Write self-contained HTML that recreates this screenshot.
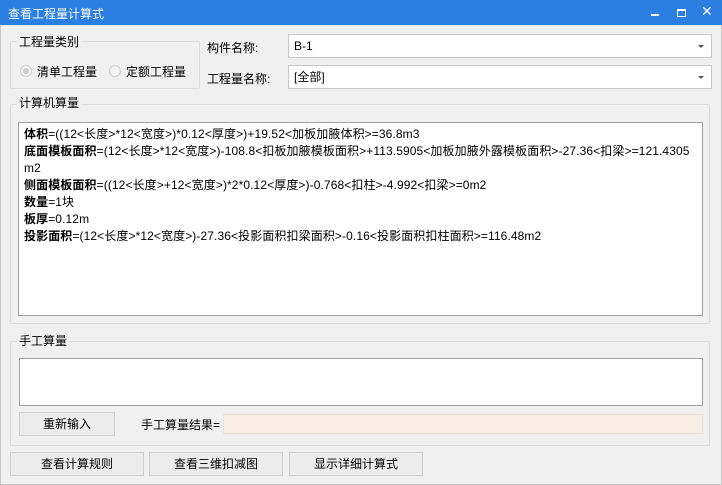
<!DOCTYPE html>
<html><head><meta charset="utf-8"><style>
*{box-sizing:border-box;margin:0;padding:0}
body{width:722px;height:485px;background:#f0f0f0;font-family:"Liberation Sans","Noto Sans CJK SC",sans-serif;font-size:12px;color:#000;position:relative;overflow:hidden}
.a{position:absolute}
.title{left:0;top:0;width:722px;height:25px;background:#2b7fe0;color:#fff}
.grp{border:1px solid #dcdcdc;border-radius:2px}
.lbl{background:#f0f0f0;padding:0 2px;line-height:14px}
.combo{background:#fff;border:1px solid #c8c8c8;height:24px;line-height:22px;padding-left:5px}
.arr{position:absolute;right:7px;top:10px;width:0;height:0;border-left:3px solid transparent;border-right:3px solid transparent;border-top:3px solid #555}
.ta{background:#fff;border:1px solid #a0a0a0}
.btn{background:#ececec;border:1px solid #cfcfcf;text-align:center;line-height:22px}
.radio{width:12px;height:12px;border-radius:50%;border:1px solid #cfcfcf;background:#f4f4f4}
.txt div{line-height:17px;white-space:nowrap;letter-spacing:0.1px}
b{font-weight:bold}
</style></head><body>
<div class="a" style="left:0;top:25px;width:722px;height:460px;border:1px solid #c8c8c8;border-top:none"></div>
<div class="a title"><span class="a" style="left:8px;top:5px;font-size:12px">查看工程量计算式</span>
<span class="a" style="left:651px;top:14px;width:8px;height:2px;background:#fff"></span>
<span class="a" style="left:677px;top:9px;width:9px;height:8px;border:1px solid #fff;border-top-width:2px"></span>
<span class="a" style="left:701px;top:3px;font-size:14px;color:#fff">✕</span></div>

<div class="a grp" style="left:10px;top:41px;width:190px;height:48px"></div>
<div class="a lbl" style="left:17px;top:35px">工程量类别</div>
<div class="a radio" style="left:20px;top:65px"><div style="width:6px;height:6px;border-radius:50%;background:#ccc;margin:2px"></div></div>
<div class="a" style="left:37px;top:63px">清单工程量</div>
<div class="a radio" style="left:109px;top:65px"></div>
<div class="a" style="left:126px;top:63px">定额工程量</div>

<div class="a" style="left:207px;top:39px">构件名称:</div>
<div class="a combo" style="left:288px;top:34px;width:424px">B-1<span class="arr"></span></div>
<div class="a" style="left:207px;top:70px">工程量名称:</div>
<div class="a combo" style="left:288px;top:65px;width:424px">[全部]<span class="arr"></span></div>

<div class="a grp" style="left:10px;top:104px;width:700px;height:220px"></div>
<div class="a lbl" style="left:17px;top:96px">计算机算量</div>
<div class="a ta txt" style="left:18px;top:122px;width:685px;height:194px;padding:3px 0 0 5px">
<div><b>体积</b>=((12&lt;长度&gt;*12&lt;宽度&gt;)*0.12&lt;厚度&gt;)+19.52&lt;加板加腋体积&gt;=36.8m3</div>
<div><b>底面模板面积</b>=(12&lt;长度&gt;*12&lt;宽度&gt;)-108.8&lt;扣板加腋模板面积&gt;+113.5905&lt;加板加腋外露模板面积&gt;-27.36&lt;扣梁&gt;=121.4305</div>
<div>m2</div>
<div><b>侧面模板面积</b>=((12&lt;长度&gt;+12&lt;宽度&gt;)*2*0.12&lt;厚度&gt;)-0.768&lt;扣柱&gt;-4.992&lt;扣梁&gt;=0m2</div>
<div><b>数量</b>=1块</div>
<div><b>板厚</b>=0.12m</div>
<div><b>投影面积</b>=(12&lt;长度&gt;*12&lt;宽度&gt;)-27.36&lt;投影面积扣梁面积&gt;-0.16&lt;投影面积扣柱面积&gt;=116.48m2</div>
</div>

<div class="a grp" style="left:10px;top:341px;width:700px;height:105px"></div>
<div class="a lbl" style="left:17px;top:334px">手工算量</div>
<div class="a ta" style="left:19px;top:358px;width:684px;height:48px"></div>
<div class="a btn" style="left:19px;top:412px;width:96px;height:24px">重新输入</div>
<div class="a" style="left:141px;top:416px">手工算量结果=</div>
<div class="a" style="left:223px;top:414px;width:480px;height:20px;background:#f9eee4;border:1px solid #ece4dc"></div>

<div class="a btn" style="left:10px;top:452px;width:134px;height:24px">查看计算规则</div>
<div class="a btn" style="left:149px;top:452px;width:134px;height:24px">查看三维扣减图</div>
<div class="a btn" style="left:289px;top:452px;width:134px;height:24px">显示详细计算式</div>
</body></html>
